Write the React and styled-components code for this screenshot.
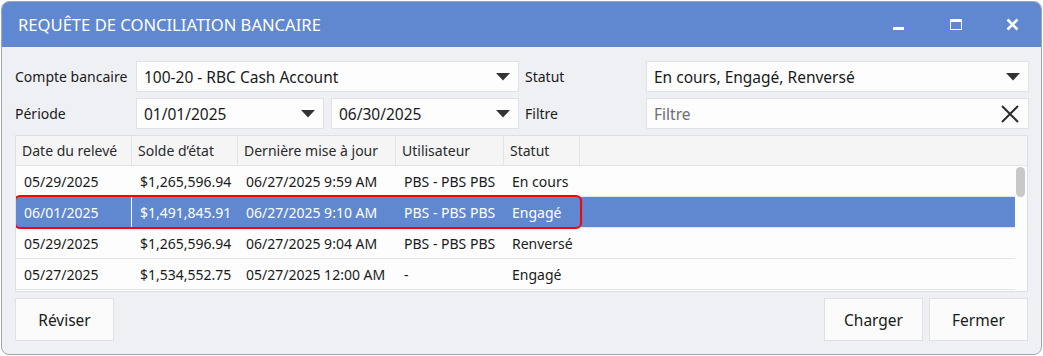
import React from "react";
import styled, { createGlobalStyle } from "styled-components";

const Global = createGlobalStyle`
  html, body { margin: 0; padding: 0; background: #ffffff; }
  body { font-family: "Noto Sans", "Open Sans", sans-serif; }
  * { box-sizing: border-box; }
`;

const Window = styled.div`
  margin: 1px 0 0 1px;
  width: 1041px;
  height: 354px;
  border: 1px solid #9ea6b6;
  border-radius: 8px;
  overflow: hidden;
  background: #eff0f4;
  display: flex;
  flex-direction: column;
`;

const TitleBar = styled.div`
  height: 45px;
  flex: none;
  background: #6088d0;
  display: flex;
  align-items: center;
  padding-left: 16px;
  color: #fff;
`;

const Title = styled.div`
  font-size: 16.6px;
  flex: 1;
`;

const WinButtons = styled.div`
  display: flex;
  height: 100%;
`;

const WinButton = styled.div`
  width: 57px;
  height: 100%;
  display: flex;
  align-items: center;
  justify-content: center;
`;

const Body = styled.div`
  flex: 1;
  display: flex;
  flex-direction: column;
  padding: 14px 13px 13px 13px;
`;

const FormRow = styled.div`
  display: flex;
  align-items: stretch;
  height: 31px;
  margin-bottom: ${(p) => p.$mb || 0}px;
`;

const Label = styled.div`
  width: ${(p) => p.$w}px;
  padding-left: ${(p) => p.$pl || 0}px;
  display: flex;
  align-items: center;
  font-size: 14px;
  color: #1a1a1a;
  flex: none;
`;

const Field = styled.div`
  width: ${(p) => p.$w}px;
  margin-right: ${(p) => p.$mr || 0}px;
  flex: none;
  background: #fdfdfd;
  border: 1px solid #e0e2e7;
  display: flex;
  align-items: center;
  padding: 0 8px 0 7px;
  font-size: 15.5px;
  color: ${(p) => (p.$placeholder ? "#707070" : "#1a1a1a")};
`;

const FieldText = styled.div`
  flex: 1;
  white-space: nowrap;
  overflow: hidden;
`;

const Grid = styled.div`
  margin-top: 6px;
  height: 157px;
  border: 1px solid #dcdfe4;
  background: #fdfdfd;
  display: flex;
  flex-direction: column;
  overflow: hidden;
`;

const HeaderRow = styled.div`
  display: flex;
  height: 30px;
  flex: none;
  background: #f5f5f6;
  border-bottom: 1px solid #e2e3e6;
`;

const HeaderCell = styled.div`
  width: ${(p) => p.$w}px;
  flex: none;
  border-right: 1px solid #e2e3e6;
  display: flex;
  align-items: center;
  padding-left: 6px;
  font-size: 14px;
  color: #2a2a2a;
  white-space: nowrap;
`;

const GridBody = styled.div`
  flex: 1;
  display: flex;
  overflow: hidden;
`;

const Rows = styled.div`
  flex: 1;
  display: flex;
  flex-direction: column;
`;

const Row = styled.div`
  display: flex;
  height: 31px;
  flex: none;
  border-bottom: 1px solid #e4e4e6;
  background: ${(p) => (p.$sel ? "#6088d0" : "transparent")};
  color: ${(p) => (p.$sel ? "#ffffff" : "#1a1a1a")};
`;

const Highlight = styled.div`
  display: flex;
  outline: ${(p) => (p.$on ? "2px solid #ff0000" : "none")};
  outline-offset: 0px;
  border-radius: 4px;
  position: relative;
  z-index: 1;
`;

const Cell = styled.div`
  width: ${(p) => p.$w}px;
  flex: none;
  display: flex;
  align-items: center;
  padding-left: 8px;
  font-size: 14px;
  white-space: nowrap;
  border-right: ${(p) => (p.$divider ? "1px solid #ffffff" : "none")};
`;

const ScrollTrack = styled.div`
  width: 12px;
  flex: none;
  padding: 1px 2px 0 1px;
`;

const Thumb = styled.div`
  width: 9px;
  height: 30px;
  border-radius: 5px;
  background: #c8c8c8;
`;

const Footer = styled.div`
  margin-top: 6px;
  display: flex;
  gap: 6px;
`;

const Spacer = styled.div`
  flex: 1;
`;

const Button = styled.div`
  width: 99px;
  height: 43px;
  background: #fbfbfb;
  border: 1px solid #dfe1e5;
  display: flex;
  align-items: center;
  justify-content: center;
  font-size: 15.5px;
  color: #1a1a1a;
`;

const Caret = () => (
  <svg width="14" height="8" viewBox="0 0 14 8">
    <path d="M0 0 H14 L7 7.5 Z" fill="#333" />
  </svg>
);

const ClearX = () => (
  <svg width="20" height="20" viewBox="0 0 20 20">
    <path d="M2 2 L18 18 M18 2 L2 18" stroke="#2b2b2b" strokeWidth="2" />
  </svg>
);

const cols = [116, 106, 158, 108, 76];

const data = [
  ["05/29/2025", "$1,265,596.94", "06/27/2025 9:59 AM", "PBS - PBS PBS", "En cours"],
  ["06/01/2025", "$1,491,845.91", "06/27/2025 9:10 AM", "PBS - PBS PBS", "Engagé"],
  ["05/29/2025", "$1,265,596.94", "06/27/2025 9:04 AM", "PBS - PBS PBS", "Renversé"],
  ["05/27/2025", "$1,534,552.75", "05/27/2025 12:00 AM", "-", "Engagé"],
];

const headers = ["Date du relevé", "Solde d’état", "Dernière mise à jour", "Utilisateur", "Statut"];

export default function App() {
  return (
    <>
      <Global />
      <Window>
        <TitleBar>
          <Title>REQUÊTE DE CONCILIATION BANCAIRE</Title>
          <WinButtons>
            <WinButton>
              <svg width="12" height="12" viewBox="0 0 12 12">
                <rect x="0" y="8" width="11" height="3" fill="#fff" />
              </svg>
            </WinButton>
            <WinButton>
              <svg width="12" height="12" viewBox="0 0 12 12">
                <rect x="0.5" y="0.5" width="11" height="10" fill="none" stroke="#fff" strokeWidth="1" />
                <rect x="0" y="0" width="12" height="3" fill="#fff" />
              </svg>
            </WinButton>
            <WinButton>
              <svg width="13" height="13" viewBox="0 0 13 13">
                <path d="M1.5 1.5 L11.5 11.5 M11.5 1.5 L1.5 11.5" stroke="#fff" strokeWidth="2.6" />
              </svg>
            </WinButton>
          </WinButtons>
        </TitleBar>
        <Body>
          <FormRow $mb={6}>
            <Label $w={121}>Compte bancaire</Label>
            <Field $w={383}>
              <FieldText>100-20 - RBC Cash Account</FieldText>
              <Caret />
            </Field>
            <Label $w={127} $pl={6}>Statut</Label>
            <Field $w={383}>
              <FieldText>En cours, Engagé, Renversé</FieldText>
              <Caret />
            </Field>
          </FormRow>
          <FormRow>
            <Label $w={121}>Période</Label>
            <Field $w={188} $mr={7}>
              <FieldText>01/01/2025</FieldText>
              <Caret />
            </Field>
            <Field $w={188}>
              <FieldText>06/30/2025</FieldText>
              <Caret />
            </Field>
            <Label $w={127} $pl={6}>Filtre</Label>
            <Field $w={383} $placeholder>
              <FieldText>Filtre</FieldText>
              <ClearX />
            </Field>
          </FormRow>
          <Grid>
            <HeaderRow>
              {headers.map((h, i) => (
                <HeaderCell key={h} $w={cols[i]}>{h}</HeaderCell>
              ))}
            </HeaderRow>
            <GridBody>
              <Rows>
                {data.map((r, ri) => (
                  <Row key={ri} $sel={ri === 1}>
                    <Highlight $on={ri === 1}>
                      {r.map((c, ci) => (
                        <Cell key={ci} $w={cols[ci]} $divider={ri === 1 && ci === 0}>
                          {c}
                        </Cell>
                      ))}
                    </Highlight>
                  </Row>
                ))}
              </Rows>
              <ScrollTrack>
                <Thumb />
              </ScrollTrack>
            </GridBody>
          </Grid>
          <Footer>
            <Button>Réviser</Button>
            <Spacer />
            <Button>Charger</Button>
            <Button>Fermer</Button>
          </Footer>
        </Body>
      </Window>
    </>
  );
}
